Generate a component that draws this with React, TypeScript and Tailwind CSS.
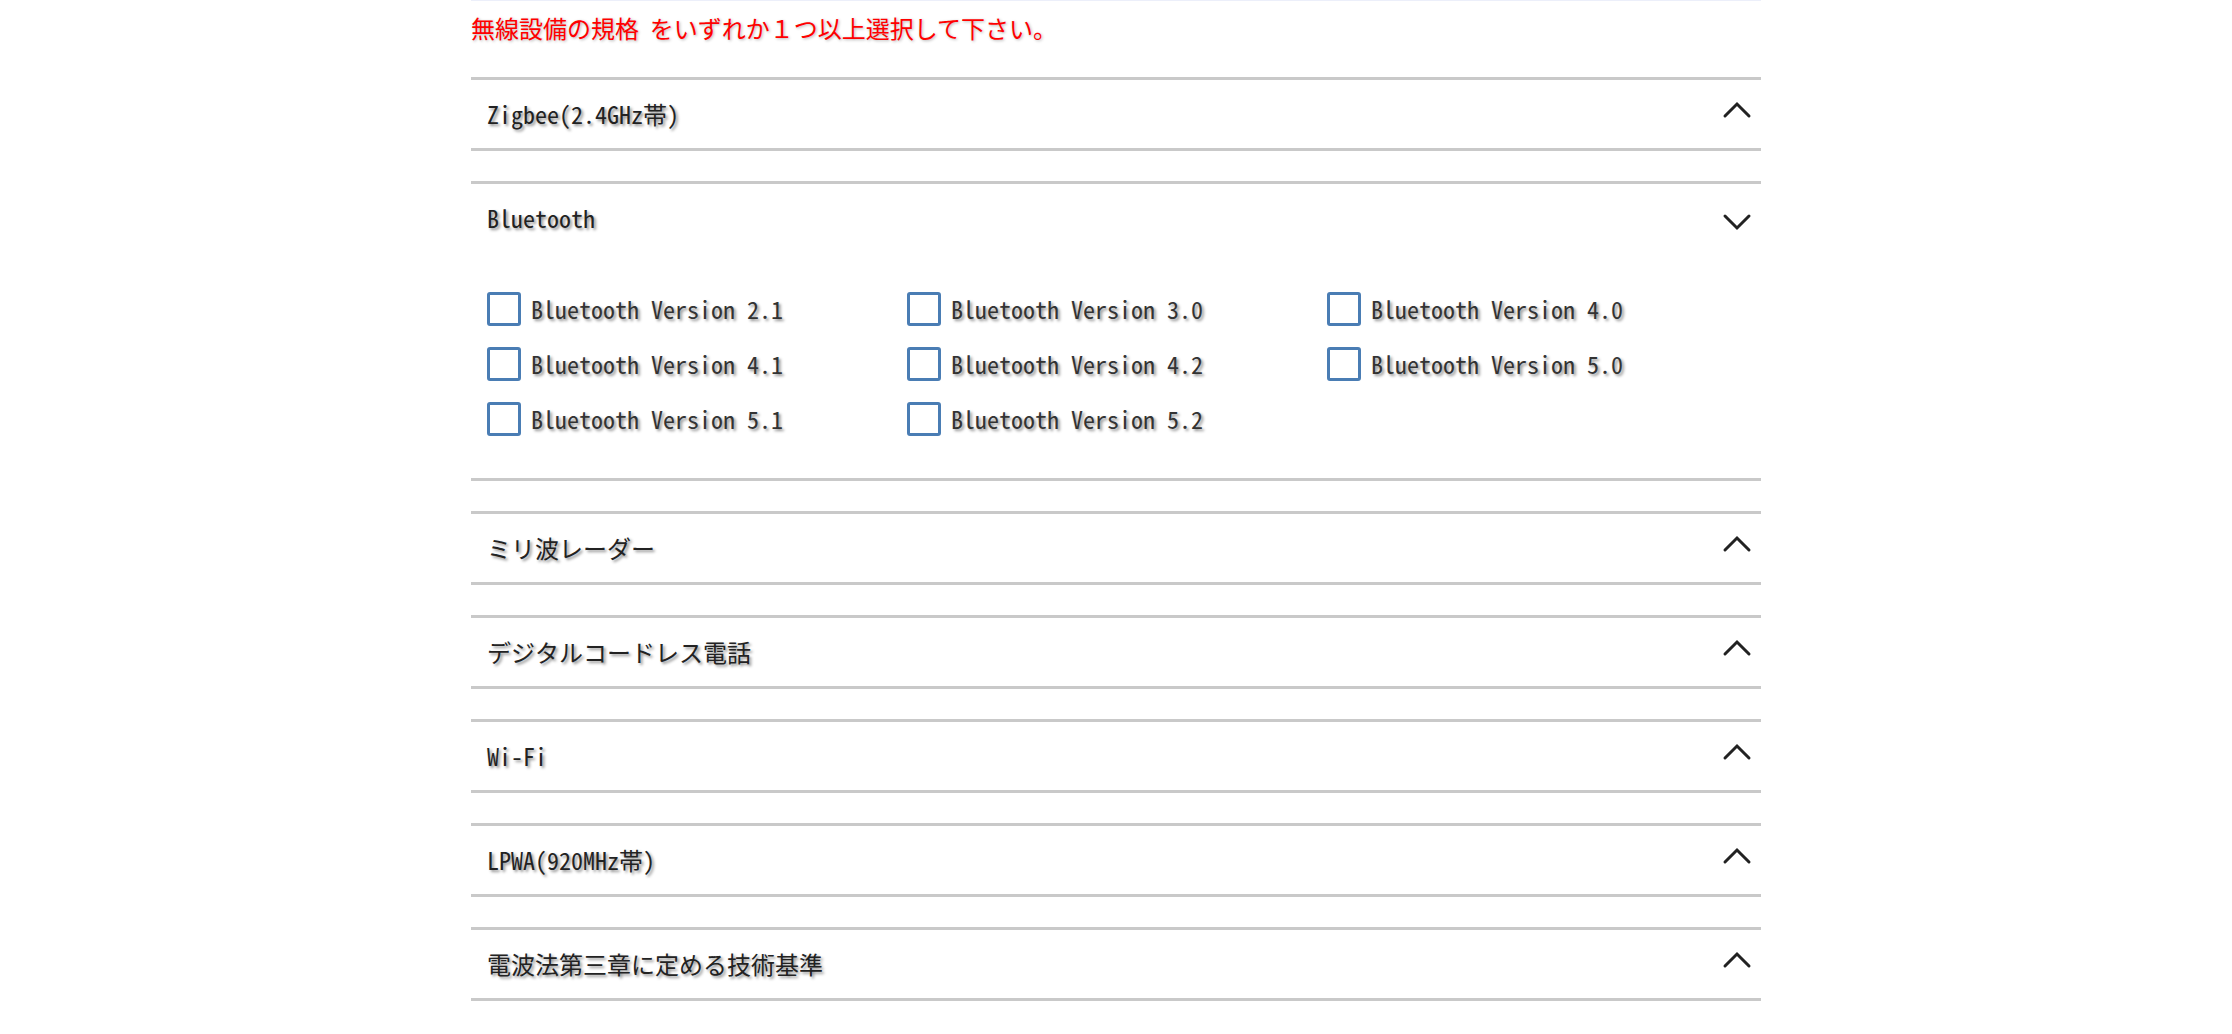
import { useState } from "react";

const SECTIONS = [
  { key: "zigbee",    title: "Zigbee(2.4GHz帯)",         items: [] as string[] },
  {
    key: "bluetooth",
    title: "Bluetooth",
    items: [
      "Bluetooth Version 2.1", "Bluetooth Version 3.0", "Bluetooth Version 4.0",
      "Bluetooth Version 4.1", "Bluetooth Version 4.2", "Bluetooth Version 5.0",
      "Bluetooth Version 5.1", "Bluetooth Version 5.2",
    ],
  },
  { key: "mmwave",    title: "ミリ波レーダー",             items: [] as string[] },
  { key: "dect",      title: "デジタルコードレス電話",     items: [] as string[] },
  { key: "wifi",      title: "Wi-Fi",                    items: [] as string[] },
  { key: "lpwa",      title: "LPWA(920MHz帯)",           items: [] as string[] },
  { key: "radio",     title: "電波法第三章に定める技術基準", items: [] as string[] },
];

const mono = "font-['Noto_Sans_Mono_CJK_JP','Noto_Sans_CJK_JP',monospace]";
const shadow = "[text-shadow:2px_2px_3px_rgba(0,0,0,0.45)]";

function Chevron({ open }: { open: boolean }) {
  return (
    <svg
      width="30"
      height="18"
      viewBox="0 0 30 18"
      className={open ? "mt-2" : "mb-2"}
      fill="none"
      stroke="#222"
      strokeWidth="3"
      strokeLinecap="round"
      strokeLinejoin="miter"
    >
      {open ? <polyline points="3,3 15,15 27,3" /> : <polyline points="3,15 15,3 27,15" />}
    </svg>
  );
}

function CheckItem({ label }: { label: string }) {
  const [checked, setChecked] = useState(false);
  return (
    <label className="flex items-center gap-[10px] cursor-pointer">
      <span
        onClick={() => setChecked(!checked)}
        className="flex h-[34px] w-[34px] shrink-0 items-center justify-center rounded-[3px] border-[3px] border-[#4a7db4] bg-white"
      >
        {checked && <span className="h-[16px] w-[16px] bg-[#4a7db4]" />}
      </span>
      <span className={`${mono} ${shadow} text-[24px] leading-[34px] text-[#333]`}>{label}</span>
    </label>
  );
}

export default function App() {
  const [open, setOpen] = useState<Record<string, boolean>>({ bluetooth: true });

  return (
    <div className="min-h-screen bg-white">
      <div className="mx-auto w-[1290px]">
        <div className="h-px bg-[#eceffa]" />

        <p
          className="mt-[11px] font-['Noto_Sans_CJK_JP',sans-serif] text-[24px] leading-[32px] text-[#ff0000] [text-shadow:1px_1px_3px_rgba(0,0,0,0.3)]"
        >
          無線設備の規格&nbsp; をいずれか１つ以上選択して下さい。
        </p>

        <div className="mt-[33px] flex flex-col gap-[30px]">
          {SECTIONS.map((s) => {
            const isOpen = !!open[s.key];
            return (
              <section key={s.key} className="border-y-[3px] border-[#c9c9c9]">
                <button
                  type="button"
                  onClick={() => setOpen({ ...open, [s.key]: !isOpen })}
                  className="flex h-[68px] w-full items-center justify-between pl-4 pr-[9px] text-left"
                >
                  <span className={`${mono} ${shadow} text-[24px] leading-none text-[#222]`}>{s.title}</span>
                  <Chevron open={isOpen} />
                </button>

                {isOpen && s.items.length > 0 && (
                  <div className="grid grid-cols-[420px_420px_420px] gap-y-[21px] pb-[42px] pl-4 pt-[40px]">
                    {s.items.map((it) => (
                      <CheckItem key={it} label={it} />
                    ))}
                  </div>
                )}
              </section>
            );
          })}
        </div>
      </div>
    </div>
  );
}
